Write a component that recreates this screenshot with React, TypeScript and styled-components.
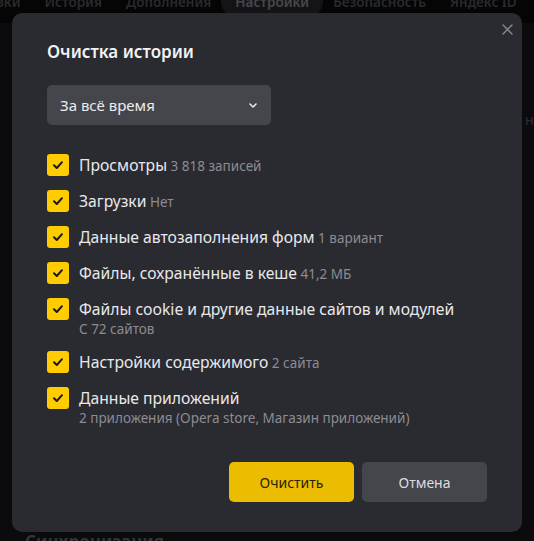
import styled, { createGlobalStyle } from "styled-components"

const GlobalStyle = createGlobalStyle`
    html, body {
        margin: 0;
        padding: 0;
        background: #0b0b0d;
        font-family: "Noto Sans", "Open Sans", sans-serif;
    }
`

type Item = {
    label: string
    hint?: string
    sub?: string
}

const items: Item[] = [
    { label: "Просмотры", hint: "3 818 записей" },
    { label: "Загрузки", hint: "Нет" },
    { label: "Данные автозаполнения форм", hint: "1 вариант" },
    { label: "Файлы, сохранённые в кеше", hint: "41,2 МБ" },
    {
        label: "Файлы cookie и другие данные сайтов и модулей",
        sub: "С 72 сайтов",
    },
    { label: "Настройки содержимого", hint: "2 сайта" },
    {
        label: "Данные приложений",
        sub: "2 приложения (Opera store, Магазин приложений)",
    },
]

const tabs = [
    "зки",
    "История",
    "Дополнения",
    "Настройки",
    "Безопасность",
    "Яндекс ID",
]

export default function App() {
    return (
        <>
            <GlobalStyle />
            <Page>
                <Nav>
                    {tabs.map((t) => (
                        <Tab key={t} $active={t === "Настройки"}>
                            {t}
                        </Tab>
                    ))}
                </Nav>
                <Content>
                    <SideWord>нт</SideWord>
                    <SectionTitle>Синхронизация</SectionTitle>
                </Content>

                <Dialog>
                    <Close aria-label="Закрыть">
                        <svg width="11" height="11" viewBox="0 0 11 11">
                            <path
                                d="M1 1L10 10M10 1L1 10"
                                stroke="#8a8a90"
                                strokeWidth="1.4"
                                strokeLinecap="round"
                            />
                        </svg>
                    </Close>
                    <Title>Очистка истории</Title>
                    <Select>
                        <span>За всё время</span>
                        <svg width="10" height="7" viewBox="0 0 10 7">
                            <path
                                d="M2 2L5 5L8 2"
                                stroke="#e6e6e8"
                                strokeWidth="1.6"
                                fill="none"
                                strokeLinecap="round"
                                strokeLinejoin="round"
                            />
                        </svg>
                    </Select>
                    <List>
                        {items.map((it) => (
                            <Row key={it.label}>
                                <Check>
                                    <svg width="14" height="14" viewBox="0 0 14 14">
                                        <path
                                            d="M3 7.2L5.8 10L11 4.2"
                                            stroke="#1a1a1a"
                                            strokeWidth="2"
                                            fill="none"
                                            strokeLinecap="round"
                                            strokeLinejoin="round"
                                        />
                                    </svg>
                                </Check>
                                <Texts>
                                    <Label>
                                        {it.label}
                                        {it.hint && <Hint> {it.hint}</Hint>}
                                    </Label>
                                    {it.sub && <Sub>{it.sub}</Sub>}
                                </Texts>
                            </Row>
                        ))}
                    </List>
                    <Buttons>
                        <Button $primary>Очистить</Button>
                        <Button>Отмена</Button>
                    </Buttons>
                </Dialog>
            </Page>
        </>
    )
}

const Page = styled.div`
    position: relative;
    width: 534px;
    height: 541px;
    overflow: hidden;
    background: #0b0b0d;
`

const Nav = styled.div`
    display: flex;
    align-items: center;
    gap: 24px;
    height: 42px;
    margin-top: -23px;
    padding-top: 4px;
    margin-left: -3px;
    background: #050506;
`

const Tab = styled.div<{ $active?: boolean }>`
    font-size: 13.5px;
    font-weight: 600;
    color: ${(p) => (p.$active ? "#47474c" : "#2a2a2e")};
    padding: 6px 14px;
    margin: 0 -14px;
    border-radius: 16px;
    background: ${(p) => (p.$active ? "#141417" : "transparent")};
`

const Content = styled.div`
    display: flex;
    flex-direction: column;
    height: 522px;
`

const SideWord = styled.div`
    align-self: flex-end;
    margin-top: 86px;
    margin-right: -7px;
    font-size: 15px;
    color: #2c2c30;
`

const SectionTitle = styled.div`
    margin-top: auto;
    margin-left: 25px;
    margin-bottom: -7px;
    font-size: 17px;
    line-height: 20px;
    font-weight: 700;
    color: #333338;
`

const Dialog = styled.div`
    position: absolute;
    left: 12px;
    top: 13px;
    width: 510px;
    height: 519px;
    box-sizing: border-box;
    padding: 27px 35px 0 35px;
    background: #2a2a31;
    border-radius: 10px;
    display: flex;
    flex-direction: column;
`

const Close = styled.button`
    position: absolute;
    top: 6px;
    right: 5px;
    width: 20px;
    height: 20px;
    padding: 0;
    border: none;
    background: none;
    display: flex;
    align-items: center;
    justify-content: center;
`

const Title = styled.h2`
    margin: 0;
    font-size: 17px;
    line-height: 24px;
    font-weight: 600;
    color: #f2f2f4;
`

const Select = styled.div`
    margin-top: 21px;
    width: 224px;
    height: 40px;
    box-sizing: border-box;
    padding: 0 13px;
    border-radius: 5px;
    background: #45454c;
    display: flex;
    align-items: center;
    justify-content: space-between;
    font-size: 15px;
    color: #ececee;
`

const List = styled.div`
    margin-top: 29px;
    display: flex;
    flex-direction: column;
    gap: 13px;
`

const Row = styled.div`
    display: flex;
    align-items: flex-start;
    gap: 10px;
`

const Check = styled.div`
    flex: none;
    width: 22px;
    height: 22px;
    border-radius: 3px;
    background: #ffcc00;
    display: flex;
    align-items: center;
    justify-content: center;
`

const Texts = styled.div`
    display: flex;
    flex-direction: column;
    gap: 1px;
`

const Label = styled.div`
    font-size: 15.7px;
    line-height: 22px;
    color: #e8e8ea;
`

const Hint = styled.span`
    font-size: 13.5px;
    color: #8c8c92;
`

const Sub = styled.div`
    font-size: 13.5px;
    line-height: 17px;
    color: #8c8c92;
`

const Buttons = styled.div`
    margin-top: auto;
    margin-bottom: 30px;
    display: flex;
    justify-content: flex-end;
    gap: 8px;
`

const Button = styled.button<{ $primary?: boolean }>`
    width: 125px;
    height: 40px;
    border: none;
    border-radius: 5px;
    font-family: inherit;
    font-size: 14px;
    background: ${(p) => (p.$primary ? "#ebbc00" : "#45454c")};
    color: ${(p) => (p.$primary ? "#2b2300" : "#dcdce0")};
`
